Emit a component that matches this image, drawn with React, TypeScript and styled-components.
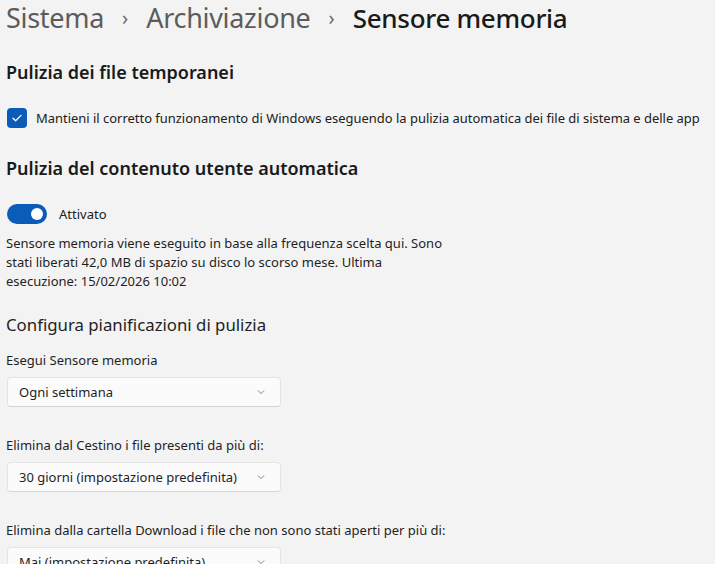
import styled, { createGlobalStyle } from 'styled-components';

const GlobalStyle = createGlobalStyle`
  html, body {
    margin: 0;
    padding: 0;
    background: #f3f3f3;
  }
  body {
    font-family: 'Noto Sans', 'Open Sans', sans-serif;
    color: #1b1b1b;
  }
`;

const scheduleFields = [
  { label: 'Esegui Sensore memoria', value: 'Ogni settimana' },
  {
    label: 'Elimina dal Cestino i file presenti da più di:',
    value: '30 giorni (impostazione predefinita)',
  },
  {
    label:
      'Elimina dalla cartella Download i file che non sono stati aperti per più di:',
    value: 'Mai (impostazione predefinita)',
  },
];

function Chevron({ size = 10 }: { size?: number }) {
  return (
    <svg width={size} height={size} viewBox="0 0 16 16" fill="none">
      <path
        d="M3.5 6l4.5 4.5L12.5 6"
        stroke="currentColor"
        strokeWidth="1.3"
        strokeLinecap="round"
        strokeLinejoin="round"
      />
    </svg>
  );
}

export default function App() {
  return (
    <Page>
      <GlobalStyle />
      <Breadcrumb>
        <Crumb>Sistema</Crumb>
        <CrumbSep>›</CrumbSep>
        <Crumb>Archiviazione</Crumb>
        <CrumbSep>›</CrumbSep>
        <Crumb $current>Sensore memoria</Crumb>
      </Breadcrumb>

      <SectionTitle $top={23}>Pulizia dei file temporanei</SectionTitle>
      <CheckRow>
        <CheckBox>
          <svg width="12" height="12" viewBox="0 0 12 12" fill="none">
            <path
              d="M2 6.3l2.6 2.5L10 3.4"
              stroke="#fff"
              strokeWidth="1.3"
              strokeLinecap="round"
              strokeLinejoin="round"
            />
          </svg>
        </CheckBox>
        <CheckLabel>
          Mantieni il corretto funzionamento di Windows eseguendo la pulizia
          automatica dei file di sistema e delle app
        </CheckLabel>
      </CheckRow>

      <SectionTitle $top={27}>Pulizia del contenuto utente automatica</SectionTitle>
      <ToggleRow>
        <Toggle>
          <Knob />
        </Toggle>
        <ToggleLabel>Attivato</ToggleLabel>
      </ToggleRow>
      <Description>
        Sensore memoria viene eseguito in base alla frequenza scelta qui. Sono
        stati liberati 42,0 MB di spazio su disco lo scorso mese. Ultima
        esecuzione: 15/02/2026 10:02
      </Description>

      <SubTitle>Configura pianificazioni di pulizia</SubTitle>
      {scheduleFields.map((f) => (
        <Field key={f.label}>
          <FieldLabel>{f.label}</FieldLabel>
          <Select>
            <span>{f.value}</span>
            <SelectChevron>
              <Chevron />
            </SelectChevron>
          </Select>
        </Field>
      ))}
    </Page>
  );
}

const Page = styled.div`
  width: 715px;
  height: 564px;
  overflow: hidden;
  padding: 0 0 0 6px;
  box-sizing: border-box;
`;

const Breadcrumb = styled.div`
  display: flex;
  align-items: baseline;
  gap: 18px;
  height: 36px;
  line-height: 36px;
`;

const Crumb = styled.span<{ $current?: boolean }>`
  font-size: ${(p) => (p.$current ? 26 : 27)}px;
  font-weight: ${(p) => (p.$current ? 500 : 400)};
  color: ${(p) => (p.$current ? '#1a1a1a' : '#5c5c5c')};
  letter-spacing: -0.3px;
`;

const CrumbSep = styled.span`
  font-size: 20px;
  color: #6a6a6a;
  position: relative;
  top: -3px;
`;

const SectionTitle = styled.h2<{ $top?: number }>`
  margin: ${(p) => p.$top ?? 22}px 0 0;
  font-size: 18px;
  font-weight: 600;
  line-height: 26px;
  color: #1a1a1a;
`;

const CheckRow = styled.div`
  display: flex;
  align-items: center;
  gap: 9px;
  margin-top: 23px;
  padding-left: 1px;
`;

const CheckBox = styled.div`
  width: 20px;
  height: 20px;
  border-radius: 4px;
  background: #0a5cb8;
  display: flex;
  align-items: center;
  justify-content: center;
  flex-shrink: 0;
`;

const CheckLabel = styled.span`
  font-size: 12.95px;
  color: #202020;
  white-space: nowrap;
`;

const ToggleRow = styled.div`
  display: flex;
  align-items: center;
  gap: 12px;
  margin-top: 23px;
  padding-left: 1px;
`;

const Toggle = styled.div`
  width: 40px;
  height: 20px;
  border-radius: 10px;
  background: #0a5cb8;
  display: flex;
  align-items: center;
  justify-content: flex-end;
  padding-right: 4px;
  box-sizing: border-box;
`;

const Knob = styled.div`
  width: 12px;
  height: 12px;
  border-radius: 50%;
  background: #fff;
`;

const ToggleLabel = styled.span`
  font-size: 13px;
  color: #202020;
`;

const Description = styled.p`
  margin: 10px 0 0;
  width: 440px;
  font-size: 13px;
  line-height: 19px;
  color: #1f1f1f;
`;

const SubTitle = styled.h3`
  margin: 22px 0 0;
  font-size: 16.8px;
  font-weight: 400;
  line-height: 24px;
  color: #1f1f1f;
`;

const Field = styled.div`
  margin-top: 14px;
  & + & {
    margin-top: 29px;
  }
`;

const FieldLabel = styled.div`
  font-size: 13px;
  line-height: 18px;
  color: #1f1f1f;
`;

const Select = styled.div`
  margin-top: 8px;
  margin-left: 1px;
  width: 274px;
  height: 30px;
  box-sizing: border-box;
  background: #fbfbfb;
  border: 1px solid #e5e5e5;
  border-bottom-color: #d4d4d4;
  border-radius: 4px;
  display: flex;
  align-items: center;
  justify-content: space-between;
  padding: 0 14px 0 11px;
  font-size: 13px;
  color: #1f1f1f;
`;

const SelectChevron = styled.span`
  display: flex;
  color: #666;
`;
